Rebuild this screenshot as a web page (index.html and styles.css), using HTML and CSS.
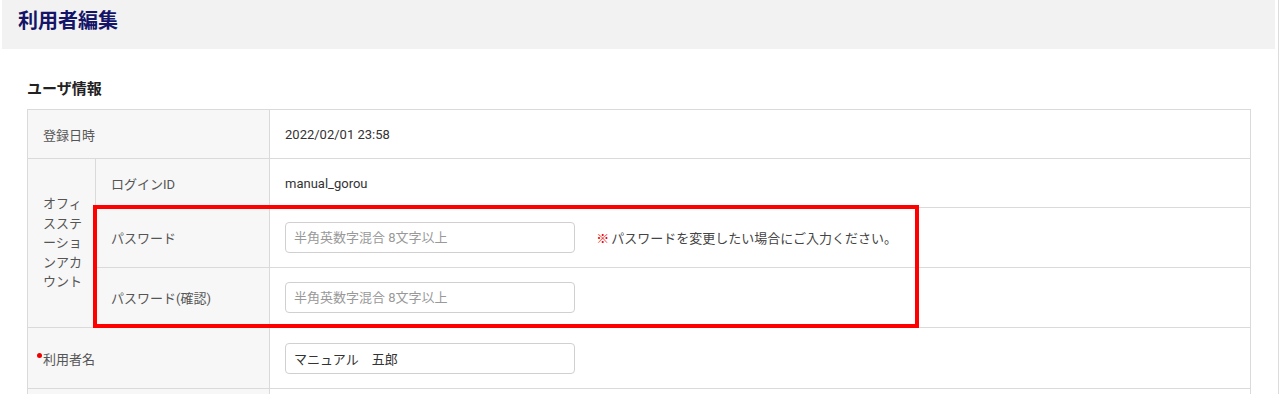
FILE: index.html
```html
<!DOCTYPE html>
<html lang="ja">
<head>
  <meta charset="UTF-8" />
  <title>利用者編集</title>
  <link rel="stylesheet" href="styles.css">
</head>
<body>
  <div class="page">
    <div class="page-header">
      <h1>利用者編集</h1>
    </div>

    <div class="section">
      <h2>ユーザ情報</h2>
      <div class="table-wrap">
        <table class="form-table">
          <colgroup>
            <col class="c-group">
            <col class="c-label">
            <col>
          </colgroup>
          <tr class="r-short">
            <th colspan="2">登録日時</th>
            <td>2022/02/01 23:58</td>
          </tr>
          <tr class="r-short">
            <th rowspan="3" class="group">オフィスステーションアカウント</th>
            <th>ログインID</th>
            <td>manual_gorou</td>
          </tr>
          <tr class="r-tall">
            <th>パスワード</th>
            <td>
              <input type="password" class="field" placeholder="半角英数字混合 8文字以上">
              <span class="note"><span class="mark">※</span>パスワードを変更したい場合にご入力ください。</span>
            </td>
          </tr>
          <tr class="r-tall">
            <th>パスワード(確認)</th>
            <td><input type="password" class="field" placeholder="半角英数字混合 8文字以上"></td>
          </tr>
          <tr class="r-name">
            <th colspan="2"><span class="req"></span>利用者名</th>
            <td><input type="text" class="field" value="マニュアル　五郎"></td>
          </tr>
          <tr class="r-tall">
            <th colspan="2"></th>
            <td></td>
          </tr>
        </table>
        <div class="highlight"></div>
      </div>
    </div>
  </div>
</body>
</html>
```

FILE: styles.css
```css
body { margin: 0; font-family: Roboto, "Noto Sans CJK JP", sans-serif; font-size: 13px; color: #333; background: #fff; }
.page { width: 1278px; height: 394px; overflow: hidden; border-right: 1px solid #dcdcdc; }
.page-header { margin: 0 3px 0 2px; height: 49px; background: #f2f2f2; padding: 0 16px; box-sizing: border-box; }
.page-header h1 { margin: 0; font-size: 20px; line-height: 42px; color: #141468; font-weight: bold; }
.section { padding: 30px 0 0 27px; }
.section h2 { margin: 0 0 10px; font-size: 15px; line-height: 20px; color: #222; font-weight: bold; }
.table-wrap { position: relative; width: 1224px; }
.form-table { width: 1224px; border-collapse: collapse; table-layout: fixed; }
.c-group { width: 68px; }
.c-label { width: 174px; }
.form-table th, .form-table td { border: 1px solid #dadada; padding: 0 15px; text-align: left; vertical-align: middle; }
.form-table th { background: #f7f7f7; font-weight: normal; color: #555; }
.form-table td { background: #fff; color: #333; }
.form-table th.group { word-break: break-all; line-height: 19.5px; padding-right: 12px; }
.r-short { height: 49px; }
.r-tall { height: 60px; }
.r-name { height: 61px; }
.field { width: 290px; height: 31px; box-sizing: border-box; border: 1px solid #d0d0d0; border-radius: 4px; padding: 0 8px; font-family: inherit; font-size: 13px; color: #333; vertical-align: middle; }
.field::placeholder { color: #999; }
.note { margin-left: 18px; color: #444; vertical-align: middle; }
.mark { color: #e00; margin-right: 2px; }
.req { display: inline-block; width: 5px; height: 5px; border-radius: 50%; background: #e00; margin-left: -6px; margin-right: 1px; vertical-align: 6px; }
.highlight { position: absolute; left: 66px; top: 96px; width: 826px; height: 123px; border: 4px solid #f00; box-sizing: border-box; pointer-events: none; }
```
